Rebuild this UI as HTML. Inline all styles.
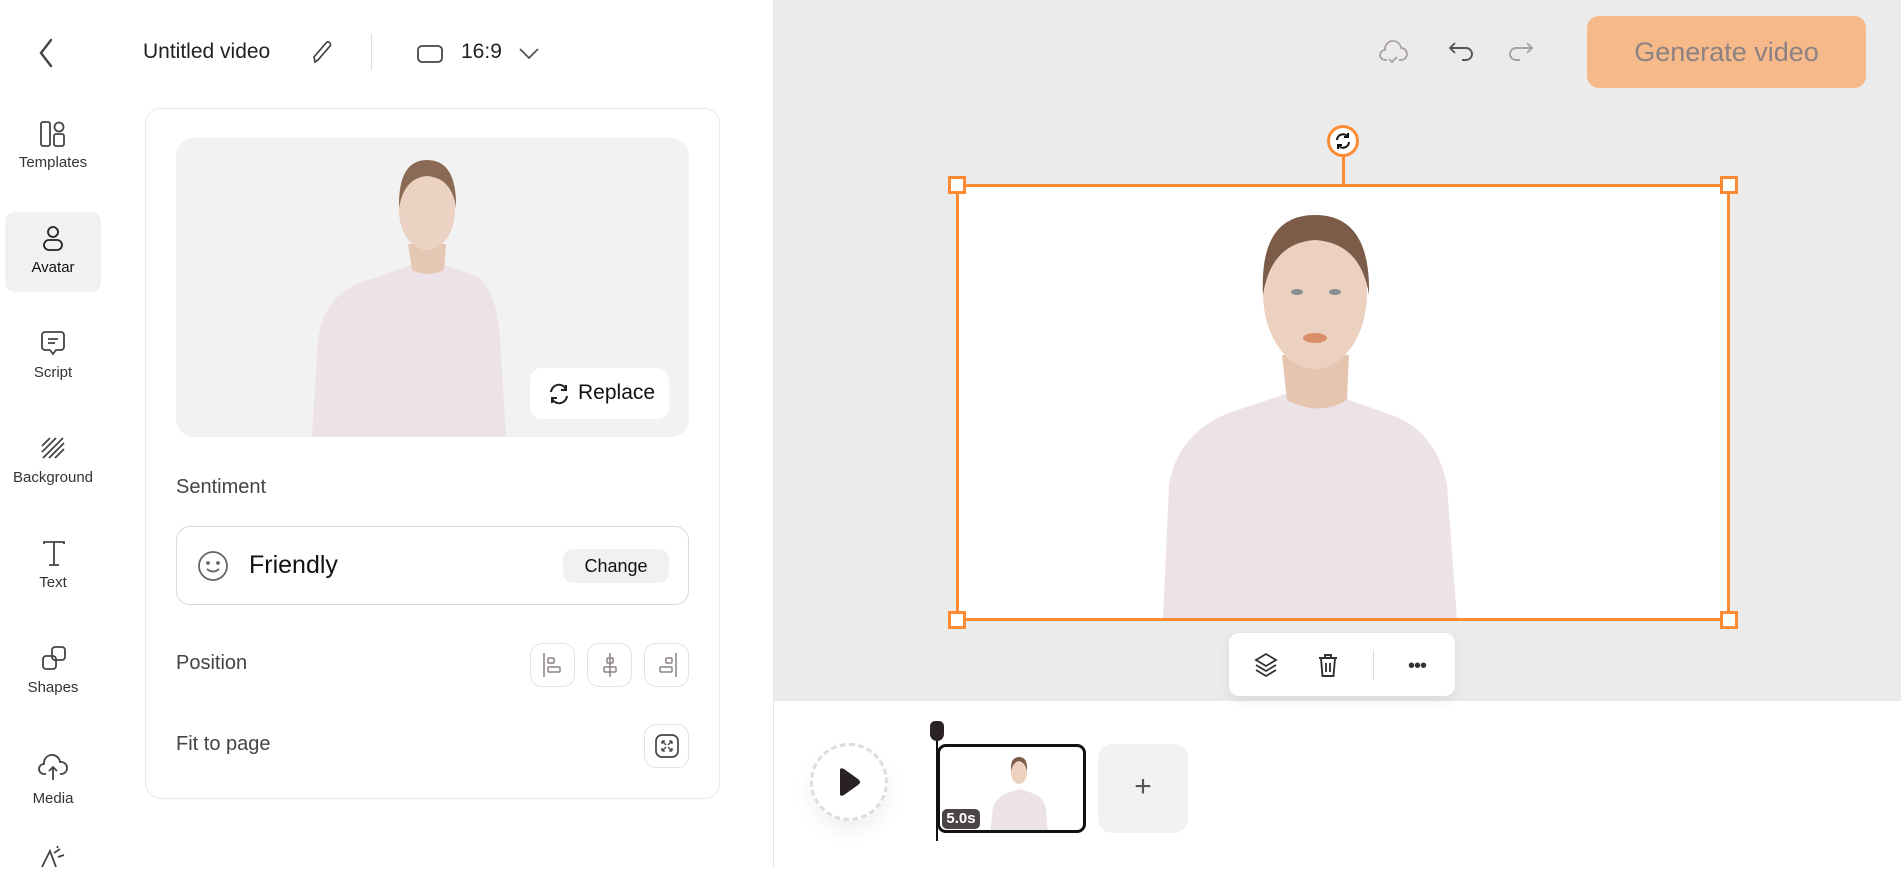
<!DOCTYPE html>
<html><head><meta charset="utf-8"><style>
*{box-sizing:border-box;margin:0;padding:0}
body{width:1901px;height:867px;overflow:hidden;background:#fff;font-family:"Liberation Sans",sans-serif;color:#222;position:relative}
.a{position:absolute}
.lbl{position:absolute;width:106px;left:0;text-align:center;font-size:15px;color:#333}
svg{position:absolute;overflow:visible}
.pb{position:absolute;width:45px;height:44px;border:1px solid #e6e2e2;border-radius:12px;background:#fff}
</style></head><body>
<!-- canvas bg -->
<div class="a" style="left:774px;top:0;width:1127px;height:701px;background:#ebebeb"></div>
<div class="a" style="left:773px;top:0;width:1px;height:867px;background:#e6e6e6"></div>

<!-- sidebar -->
<svg style="left:36px;top:38px" width="20" height="30" viewBox="0 0 20 30"><path d="M15 2 L5 15 L15 28" fill="none" stroke="#444" stroke-width="2.4" stroke-linecap="round"/></svg>
<div class="a" style="left:5px;top:212px;width:96px;height:80px;background:#f1f1f1;border-radius:10px"></div>
<svg style="left:39px;top:120px" width="28" height="28" viewBox="0 0 28 28" fill="none" stroke="#444" stroke-width="1.8"><rect x="2" y="2" width="9" height="24" rx="2"/><circle cx="20" cy="7" r="4.5"/><rect x="15" y="14" width="10" height="12" rx="2"/></svg>
<div class="lbl" style="top:154px">Templates</div>
<svg style="left:41px;top:225px" width="24" height="28" viewBox="0 0 24 28" fill="none" stroke="#222" stroke-width="1.8"><circle cx="12" cy="7" r="5"/><rect x="3" y="15" width="18" height="10" rx="5"/></svg>
<div class="lbl" style="top:259px;color:#111">Avatar</div>
<svg style="left:40px;top:330px" width="26" height="28" viewBox="0 0 26 28" fill="none" stroke="#444" stroke-width="1.8"><path d="M5 2h16a3 3 0 0 1 3 3v12a3 3 0 0 1-3 3h-5l-3 4-3-4H5a3 3 0 0 1-3-3V5a3 3 0 0 1 3-3z"/><path d="M8 9h10M8 13h7"/></svg>
<div class="lbl" style="top:364px">Script</div>
<svg style="left:40px;top:436px" width="26" height="24" viewBox="0 0 26 24" fill="none" stroke="#444" stroke-width="1.8"><path d="M2 10 10 2M2 16 16 2M3 22 23 2M9 22 24 7M15 22 24 13"/></svg>
<div class="lbl" style="top:469px">Background</div>
<svg style="left:42px;top:540px" width="24" height="28" viewBox="0 0 24 28" fill="none" stroke="#444" stroke-width="1.8"><path d="M2 4V2h20v2M12 2v23M7 25h10"/></svg>
<div class="lbl" style="top:574px">Text</div>
<svg style="left:40px;top:645px" width="28" height="28" viewBox="0 0 28 28" fill="none" stroke="#444" stroke-width="1.8"><rect x="12" y="2" width="13" height="13" rx="3"/><rect x="3" y="11" width="13" height="13" rx="3"/></svg>
<div class="lbl" style="top:679px">Shapes</div>
<svg style="left:37px;top:752px" width="32" height="30" viewBox="0 0 32 30" fill="none" stroke="#444" stroke-width="1.8"><path d="M9 22H7a5 5 0 0 1 0-10 8 8 0 0 1 16-2 6 6 0 0 1 2 12h-2"/><path d="M16 28V15M12 19l4-4 4 4"/></svg>
<div class="lbl" style="top:790px">Media</div>
<svg style="left:40px;top:845px" width="28" height="24" viewBox="0 0 28 24" fill="none" stroke="#444" stroke-width="1.8"><path d="M2 22 10 6l6 16M14 8l6-4M18 12l6-2M17 3l1-2"/></svg>

<!-- header -->
<div class="a" style="left:143px;top:40px;font-size:21px;color:#222">Untitled video</div>
<svg style="left:311px;top:40px" width="22" height="24" viewBox="0 0 22 24" fill="none" stroke="#444" stroke-width="1.7"><path d="M4 22 3 17 15 3a2.5 2.5 0 0 1 4 3L7 20z"/></svg>
<div class="a" style="left:371px;top:34px;width:1px;height:36px;background:#ddd"></div>
<svg style="left:416px;top:44px" width="28" height="20" viewBox="0 0 28 20" fill="none" stroke="#444" stroke-width="1.8"><rect x="2" y="2" width="24" height="16" rx="4"/></svg>
<div class="a" style="left:461px;top:40px;font-size:21px;color:#222">16:9</div>
<svg style="left:518px;top:47px" width="22" height="14" viewBox="0 0 22 14" fill="none" stroke="#555" stroke-width="1.8"><path d="M2 2l9 9 9-9"/></svg>

<!-- panel -->
<div class="a" style="left:145px;top:108px;width:575px;height:691px;border:1px solid #ebe8e8;border-radius:16px"></div>
<div class="a" style="left:176px;top:138px;width:513px;height:299px;background:#f2f2f2;border-radius:18px;overflow:hidden">
<svg style="left:0;top:0" width="513" height="299" viewBox="0 0 513 299">
<path d="M136 299 L142 200 Q150 150 200 140 L232 128 L252 122 L272 128 L300 138 Q320 150 324 200 L330 299Z" fill="#ece2e8"/>
<path d="M232 106 L236 132 Q252 140 268 132 L270 106Z" fill="#e6c7b3"/>
<ellipse cx="251" cy="72" rx="28" ry="40" fill="#ecd2c2"/>
<path d="M223 70 Q222 22 251 22 Q281 22 280 70 Q276 40 251 38 Q228 40 223 70Z" fill="#8a6a54"/>
</svg>
<div class="a" style="left:354px;top:230px;width:139px;height:51px;background:#fff;border-radius:12px"></div>
<svg style="left:371px;top:244px" width="24" height="24" viewBox="0 0 24 24" fill="none" stroke="#222" stroke-width="2"><path d="M4 10a8 8 0 0 1 15-3M20 14a8 8 0 0 1-15 3"/><path d="M19 3v5h-5M5 21v-5h5"/></svg>
<div class="a" style="left:402px;top:243px;font-size:21px;color:#111">Replace</div>
</div>

<div class="a" style="left:176px;top:476px;font-size:20px;color:#444">Sentiment</div>
<div class="a" style="left:176px;top:526px;width:513px;height:79px;border:1px solid #ddd8d8;border-radius:14px"></div>
<svg style="left:197px;top:550px" width="32" height="32" viewBox="0 0 32 32" fill="none" stroke="#666" stroke-width="1.8"><circle cx="16" cy="16" r="14"/><circle cx="11" cy="13" r="1" fill="#666"/><circle cx="21" cy="13" r="1" fill="#666"/><path d="M10 19q6 5 12 0"/></svg>
<div class="a" style="left:249px;top:551px;font-size:25px;color:#111">Friendly</div>
<div class="a" style="left:563px;top:549px;width:106px;height:34px;background:#f1f1f1;border-radius:10px;font-size:18px;text-align:center;line-height:34px;color:#111">Change</div>

<div class="a" style="left:176px;top:652px;font-size:20px;color:#444">Position</div>
<div class="pb" style="left:530px;top:643px"></div><div class="pb" style="left:587px;top:643px"></div><div class="pb" style="left:644px;top:643px"></div>
<svg style="left:541px;top:652px" width="24" height="26" viewBox="0 0 24 26" fill="none" stroke="#8a8080" stroke-width="1.5"><path d="M3 1v24"/><rect x="7" y="6" width="6" height="5" rx="1"/><rect x="7" y="15" width="12" height="5" rx="1"/></svg>
<svg style="left:598px;top:652px" width="24" height="26" viewBox="0 0 24 26" fill="none" stroke="#8a8080" stroke-width="1.5"><path d="M12 1v24"/><rect x="9" y="6" width="6" height="5" rx="1"/><rect x="6" y="15" width="12" height="5" rx="1"/></svg>
<svg style="left:655px;top:652px" width="24" height="26" viewBox="0 0 24 26" fill="none" stroke="#8a8080" stroke-width="1.5"><path d="M21 1v24"/><rect x="11" y="6" width="6" height="5" rx="1"/><rect x="5" y="15" width="12" height="5" rx="1"/></svg>

<div class="a" style="left:176px;top:733px;font-size:20px;color:#444">Fit to page</div>
<div class="pb" style="left:644px;top:724px"></div>
<svg style="left:654px;top:733px" width="26" height="26" viewBox="0 0 26 26" fill="none" stroke="#444" stroke-width="1.7"><rect x="2" y="2" width="22" height="22" rx="6"/><path d="M8 8l4 4M8 8h3M8 8v3M18 8l-4 4M18 8h-3M18 8v3M8 18l4-4M8 18h3M8 18v-3M18 18l-4-4M18 18h-3M18 18v-3" stroke-width="1.3"/></svg>

<!-- top right -->
<svg style="left:1378px;top:38px" width="30" height="28" viewBox="0 0 30 28" fill="none" stroke="#aaa0a0" stroke-width="1.7"><path d="M9 22H7a5 5 0 0 1 0-10 8 8 0 0 1 16-2 6 6 0 0 1 0 12h-2M11 21l3 3 5-5"/></svg>
<svg style="left:1447px;top:40px" width="28" height="24" viewBox="0 0 28 24" fill="none" stroke="#555" stroke-width="1.9"><path d="M8 3 3 8l5 5M3 8h16a6 6 0 0 1 0 12h-4"/></svg>
<svg style="left:1507px;top:40px" width="28" height="24" viewBox="0 0 28 24" fill="none" stroke="#aaa0a0" stroke-width="1.9"><path d="M20 3l5 5-5 5M25 8H9a6 6 0 0 0 0 12h4"/></svg>
<div class="a" style="left:1587px;top:16px;width:279px;height:72px;background:#f5b98a;border-radius:12px;text-align:center;line-height:72px;font-size:27px;color:#8c8282">Generate video</div>

<!-- canvas frame -->
<div class="a" style="left:957px;top:185px;width:772px;height:435px;background:#fff;overflow:hidden">
<svg style="left:0;top:0" width="772" height="435" viewBox="0 0 772 435">
<path d="M206 435 L212 300 Q222 240 290 222 L340 205 L392 215 L440 232 Q480 250 490 300 L500 435Z" fill="#ece2e8"/>
<path d="M325 170 L330 215 Q362 232 390 215 L392 170Z" fill="#e6c5b0"/>
<ellipse cx="358" cy="108" rx="52" ry="76" fill="#ecd0c0"/>
<path d="M306 110 Q302 30 358 30 Q414 30 412 110 Q404 58 358 55 Q314 58 306 110Z" fill="#7c5c48"/>
<ellipse cx="340" cy="107" rx="6" ry="3" fill="#8b8f95"/><ellipse cx="378" cy="107" rx="6" ry="3" fill="#8b8f95"/>
<ellipse cx="358" cy="153" rx="12" ry="5" fill="#d98e6a"/>
</svg></div>
<div class="a" style="left:956px;top:184px;width:774px;height:437px;border:3px solid #fc8b34"></div>
<div class="a" style="left:1342px;top:156px;width:3px;height:30px;background:#fc8b34"></div>
<div class="a" style="left:1327px;top:125px;width:32px;height:32px;border:3px solid #fc8b34;border-radius:50%;background:#fff"></div>
<svg style="left:1333px;top:131px" width="20" height="20" viewBox="0 0 20 20" fill="none" stroke="#111" stroke-width="2"><path d="M4 9a6 6 0 0 1 11-3M16 11a6 6 0 0 1-11 3"/><path d="M15 2v4h-4M5 18v-4h4"/></svg>
<div class="a" style="left:948px;top:176px;width:18px;height:18px;border:3px solid #fc8b34;background:#fff"></div>
<div class="a" style="left:1720px;top:176px;width:18px;height:18px;border:3px solid #fc8b34;background:#fff"></div>
<div class="a" style="left:948px;top:611px;width:18px;height:18px;border:3px solid #fc8b34;background:#fff"></div>
<div class="a" style="left:1720px;top:611px;width:18px;height:18px;border:3px solid #fc8b34;background:#fff"></div>

<!-- toolbar -->
<div class="a" style="left:1229px;top:633px;width:226px;height:63px;background:#fff;border-radius:10px;box-shadow:0 4px 12px rgba(0,0,0,.08)"></div>
<svg style="left:1253px;top:652px" width="26" height="26" viewBox="0 0 26 26" fill="none" stroke="#333" stroke-width="1.8"><path d="M13 2 23 8 13 14 3 8Z"/><path d="M3 13l10 6 10-6M3 18l10 6 10-6"/></svg>
<svg style="left:1317px;top:652px" width="22" height="26" viewBox="0 0 22 26" fill="none" stroke="#333" stroke-width="1.9"><path d="M2 6h18M8 6V3h6v3M4 6l1.5 18h11L18 6M9 11v9M13 11v9"/></svg>
<div class="a" style="left:1373px;top:650px;width:1px;height:30px;background:#ddd"></div>
<div class="a" style="left:1408px;top:655px;font-size:20px;color:#333;letter-spacing:-1px">•••</div>

<!-- timeline -->
<div class="a" style="left:810px;top:743px;width:78px;height:78px;border-radius:50%;border:3px dashed #e2dcdf;background:#fff;box-shadow:0 10px 20px rgba(0,0,0,.06)"></div>
<svg style="left:836px;top:767px" width="26" height="30" viewBox="0 0 26 30"><path d="M4 3Q4 0 8 2L22 12Q26 15 22 18L8 28Q4 30 4 27Z" fill="#2a2222"/></svg>
<div class="a" style="left:937px;top:744px;width:149px;height:89px;border:3px solid #111;border-radius:9px;background:#fff;overflow:hidden">
<svg style="left:0;top:0" width="149" height="89" viewBox="0 0 149 89"><path d="M50 89 L53 60 Q58 48 70 45 L80 42 L92 46 Q104 50 106 62 L108 89Z" fill="#ece2e8"/><ellipse cx="79" cy="25" rx="8" ry="12" fill="#ecd0c0"/><path d="M71 24 Q70 10 79 10 Q88 10 87 24 Q85 15 79 14 Q73 15 71 24Z" fill="#7c5c48"/></svg>
<div class="a" style="left:2px;top:62px;width:38px;height:20px;background:#4a4444;border-radius:5px;color:#fff;font-size:15px;font-weight:bold;text-align:center;line-height:20px">5.0s</div>
</div>
<div class="a" style="left:936px;top:737px;width:2px;height:104px;background:#111"></div>
<div class="a" style="left:930px;top:721px;width:14px;height:20px;background:#2a2222;border-radius:5px 5px 7px 7px"></div>
<div class="a" style="left:1098px;top:744px;width:90px;height:89px;background:#f2f2f2;border-radius:14px;text-align:center;line-height:86px;font-size:30px;color:#555">+</div>
</body></html>
